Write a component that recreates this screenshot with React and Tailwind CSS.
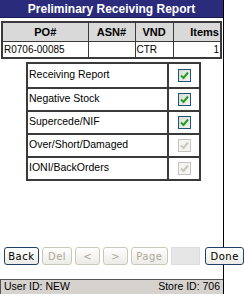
import { Fragment } from 'react'

const reports = [
  { label: 'Receiving Report', on: true },
  { label: 'Negative Stock', on: true },
  { label: 'Supercede/NIF', on: true },
  { label: 'Over/Short/Damaged', on: false },
  { label: 'IONI/BackOrders', on: false },
]

function Check({ on }) {
  return (
    <span className={`inline-flex items-center justify-center w-[13px] h-[13px] border ${on ? 'border-[#1c5180] bg-gradient-to-br from-[#dcdcd6] to-[#f4f4f0]' : 'border-[#c5c5bd] bg-[#f4f4f0]'}`}>
      <svg width="9" height="9" viewBox="0 0 9 9">
        <path d="M1 4.5 L3.5 7 L8 1.5" fill="none" stroke={on ? '#21a121' : '#c8c8c0'} strokeWidth="2" />
      </svg>
    </span>
  )
}

function Btn({ children, off, w }) {
  return (
    <button className={`h-[18px] ${w} rounded-[3px] border text-[10px] tracking-[0.5px] font-['DejaVu_Sans',sans-serif] bg-gradient-to-b from-white to-[#ecebe6] ${off ? 'border-[#cac8bb] text-[#aca899]' : 'border-[#1c4366] text-black'}`}>
      {children}
    </button>
  )
}

export default function App() {
  return (
    <div className="w-[244px] h-[296px] bg-white overflow-hidden font-['Liberation_Sans',Arial,sans-serif] text-black">
      <div className="w-[224px] h-[294px] border-r border-black flex flex-col">
        <div className="h-[18px] bg-[#2b2b7c] border-b border-[#1a1a55] text-white font-bold text-[12px] leading-[18px] text-center">
          Preliminary Receiving Report
        </div>

        <table className="mt-[3px] ml-[1px] w-[221px] border-collapse border-2 border-[#3a3a3a] text-[10px]">
          <thead>
            <tr className="h-[19px] bg-[#d9d9d9] text-[11px] font-bold">
              <th className="w-[86px] border border-[#3a3a3a] text-center">PO#</th>
              <th className="w-[47px] border border-[#3a3a3a] text-center">ASN#</th>
              <th className="w-[38px] border border-[#3a3a3a] text-center">VND</th>
              <th className="border border-[#3a3a3a] text-right pr-[1px]">Items</th>
            </tr>
          </thead>
          <tbody>
            <tr className="h-[16px]">
              <td className="border border-[#3a3a3a] pl-[1px]">R0706-00085</td>
              <td className="border border-[#3a3a3a]"></td>
              <td className="border border-[#3a3a3a] pl-[1px]">CTR</td>
              <td className="border border-[#3a3a3a] text-right pr-[1px]">1</td>
            </tr>
          </tbody>
        </table>

        <div className="mt-[3px] ml-[26px] w-[175px] grid grid-cols-[141px_1fr] border-2 border-[#3a3a3a] text-[10.5px]">
          {reports.map((r, i) => (
            <Fragment key={r.label}>
              <div className={`h-[23px] flex items-center pl-[1px] border-r-2 border-[#3a3a3a] ${i ? 'border-t-2' : ''}`}>{r.label}</div>
              <div className={`h-[23px] flex items-center justify-center border-[#3a3a3a] ${i ? 'border-t-2' : ''}`}>
                <Check on={r.on} />
              </div>
            </Fragment>
          ))}
        </div>

        <div className="flex-1" />

        <div className="ml-[4px] w-[240px] flex items-center gap-[3px]">
          <Btn w="w-[35px]">Back</Btn>
          <Btn w="w-[31px]" off>Del</Btn>
          <Btn w="w-[25px]" off>&lt;</Btn>
          <Btn w="w-[25px]" off>&gt;</Btn>
          <Btn w="w-[37px]" off>Page</Btn>
          <div className="h-[18px] w-[32px] bg-[#e6e6e6] border-r-2 border-white shadow-[inset_0_0_0_1px_#dcdcdc]" />
          <Btn w="w-[39px]">Done</Btn>
        </div>

        <div className="mt-[14px] h-[15px] bg-[#d6d3ce] border-t border-l border-[#555] flex items-center justify-between px-[3px] text-[10.5px]">
          <span>User ID: NEW</span>
          <span>Store ID: 706</span>
        </div>
      </div>
    </div>
  )
}
